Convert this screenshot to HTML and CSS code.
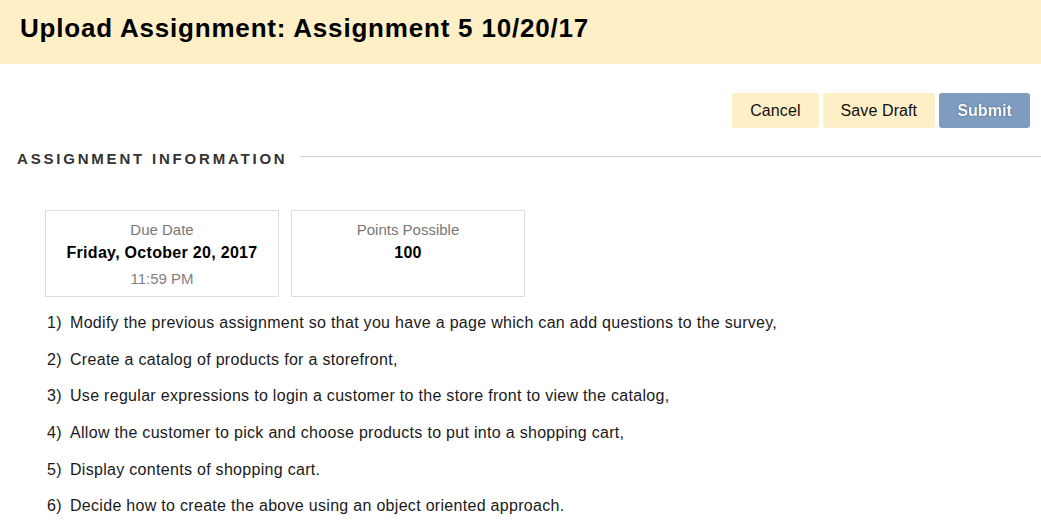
FILE: index.html
```html
<!DOCTYPE html>
<html lang="en">
<head>
<meta charset="utf-8">
<title>Upload Assignment</title>
<link rel="stylesheet" href="styles.css">
</head>
<body>
<header class="page-header">
  <h1 class="page-title">Upload Assignment: Assignment 5 10/20/17</h1>
</header>
<div class="actions">
  <button class="btn btn-light" type="button">Cancel</button>
  <button class="btn btn-light" type="button">Save Draft</button>
  <button class="btn btn-primary" type="button">Submit</button>
</div>
<section class="info">
  <div class="section-head">
    <h2 class="section-title">ASSIGNMENT INFORMATION</h2>
    <div class="section-rule"></div>
  </div>
  <div class="cards">
    <div class="card">
      <div class="card-label">Due Date</div>
      <div class="card-value">Friday, October 20, 2017</div>
      <div class="card-sub">11:59 PM</div>
    </div>
    <div class="card">
      <div class="card-label">Points Possible</div>
      <div class="card-value">100</div>
    </div>
  </div>
  <div class="tasks">
    <p class="task"><span class="num">1)</span>Modify the previous assignment so that you have a page which can add questions to the survey,</p>
    <p class="task"><span class="num">2)</span>Create a catalog of products for a storefront,</p>
    <p class="task"><span class="num">3)</span>Use regular expressions to login a customer to the store front to view the catalog,</p>
    <p class="task"><span class="num">4)</span>Allow the customer to pick and choose products to put into a shopping cart,</p>
    <p class="task"><span class="num">5)</span>Display contents of shopping cart.</p>
    <p class="task"><span class="num">6)</span>Decide how to create the above using an object oriented approach.</p>
  </div>
</section>
</body>
</html>
```
FILE: styles.css
```css
html, body {
  margin: 0;
  padding: 0;
  background: #ffffff;
}

body {
  font-family: "Liberation Sans", Arial, sans-serif;
  color: #111;
}

.page-header {
  box-sizing: border-box;
  height: 64px;
  padding: 13px 20px 0;
  background: #feefc7;
}

.page-title {
  margin: 0;
  font-size: 26px;
  line-height: 30px;
  font-weight: bold;
  letter-spacing: 0.8px;
  color: #000;
}

.actions {
  display: flex;
  justify-content: flex-end;
  gap: 4px;
  padding: 29px 11px 0 0;
}

.btn {
  height: 35px;
  padding: 0 18px;
  border: none;
  border-radius: 3px;
  font-family: "Liberation Sans", Arial, sans-serif;
  font-size: 16px;
  line-height: 35px;
  letter-spacing: 0.1px;
  cursor: pointer;
}

.btn-light {
  background: #feefc7;
  color: #111;
}

.btn-primary {
  background: #7f9bc0;
  color: #fff;
  font-weight: bold;
  text-shadow: 0 0 1px #2f4566, 0 0 1px #2f4566;
}

.section-head {
  display: flex;
  align-items: flex-start;
  margin-top: 21px;
  padding-left: 17px;
}

.section-title {
  margin: 0;
  font-size: 15px;
  line-height: 20px;
  font-weight: bold;
  letter-spacing: 2.8px;
  color: #333;
}

.section-rule {
  flex: 1;
  height: 1px;
  margin: 7px 0 0 13px;
  background: #cccccc;
}

.cards {
  display: flex;
  gap: 12px;
  margin-top: 41px;
  padding-left: 45px;
}

.card {
  box-sizing: border-box;
  width: 234px;
  height: 87px;
  padding-top: 7px;
  border: 1px solid #dddddd;
  text-align: center;
}

.card-label {
  font-size: 15px;
  line-height: 23px;
  color: #777;
}

.card-value {
  font-size: 16px;
  line-height: 24px;
  font-weight: bold;
  letter-spacing: 0.3px;
  color: #000;
}

.card-sub {
  font-size: 15px;
  line-height: 28px;
  color: #808080;
}

.tasks {
  margin-top: 15px;
  padding-left: 47px;
}

.task {
  margin: 0 0 14.7px;
  font-size: 16px;
  line-height: 22px;
  letter-spacing: 0.3px;
  color: #1a1a1a;
}

.num {
  display: inline-block;
  width: 23px;
}
```
